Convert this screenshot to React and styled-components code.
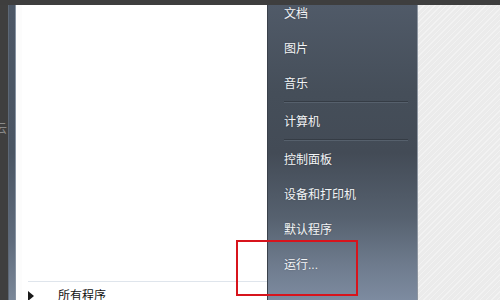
import React from 'react';
import styled, { createGlobalStyle } from 'styled-components';

const GlobalStyle = createGlobalStyle`
	html, body {
		margin: 0;
		padding: 0;
		background: #3d3d3d;
	}
	body {
		font-family: "Liberation Sans", "Noto Sans CJK SC", sans-serif;
	}
`;

const places = [
	{ label: '文档' },
	{ label: '图片' },
	{ label: '音乐', divider: true },
	{ label: '计算机', divider: true },
	{ label: '控制面板' },
	{ label: '设备和打印机' },
	{ label: '默认程序' },
	{ label: '运行...' },
];

const App = () => {
	return (
		<>
			<GlobalStyle />
			<Screen>
				<TopBar />
				<Body>
					<Gutter>
						<GutterText>云</GutterText>
					</Gutter>
					<Rail />
					<ProgramsPane>
						<Spacer />
						<AllPrograms>
							<Arrow />
							<span>所有程序</span>
						</AllPrograms>
					</ProgramsPane>
					<PlacesPane>
						<PlacesList>
							{places.map((item) => (
								<React.Fragment key={item.label}>
									<PlaceItem>{item.label}</PlaceItem>
									{item.divider && <Divider />}
								</React.Fragment>
							))}
						</PlacesList>
					</PlacesPane>
					<Backdrop />
				</Body>
				<Highlight />
			</Screen>
		</>
	);
};

const Screen = styled.div`
	position: relative;
	width: 500px;
	height: 300px;
	overflow: hidden;
	display: flex;
	flex-direction: column;
	background: #3d3d3d;
`;

const TopBar = styled.div`
	height: 5px;
	flex: none;
	background: #3e3e3e;
`;

const Body = styled.div`
	flex: 1;
	display: flex;
	min-height: 0;
`;

const Gutter = styled.div`
	width: 8px;
	flex: none;
	background: #3f3f3f;
	overflow: hidden;
	padding-top: 117px;
	box-sizing: border-box;
`;

const GutterText = styled.div`
	margin-left: -5px;
	font-size: 12px;
	line-height: 14px;
	color: #8a8a8a;
	white-space: nowrap;
`;

const Rail = styled.div`
	width: 8px;
	flex: none;
	box-sizing: border-box;
	border-left: 1px solid #5d6876;
	border-right: 1px solid #8793a2;
	background: linear-gradient(#4c5766 0%, #4a5563 50%, #5f6b7c 80%, #7a8798 100%);
`;

const ProgramsPane = styled.div`
	width: 251px;
	flex: none;
	display: flex;
	flex-direction: column;
	background: #ffffff;
	border-left: 6px solid #fcfcfc;
	box-sizing: border-box;
`;

const Spacer = styled.div`
	flex: 1;
`;

const AllPrograms = styled.div`
	height: 14px;
	flex: none;
	display: flex;
	align-items: flex-start;
	gap: 24px;
	margin: 0 0 -3px 6px;
	padding-top: 7px;
	border-top: 1px solid #dfe5ec;
	font-size: 12px;
	line-height: 14px;
	color: #111;
`;

const Arrow = styled.span`
	width: 0;
	height: 0;
	margin-top: 2px;
	border-top: 5px solid transparent;
	border-bottom: 5px solid transparent;
	border-left: 6px solid #1a1a1a;
`;

const PlacesPane = styled.div`
	width: 151px;
	flex: none;
	box-sizing: border-box;
	overflow: hidden;
	border-left: 1px solid #3a414b;
	border-right: 1px solid #8d95a0;
	background: linear-gradient(
		#505a68 0%,
		#454e59 30%,
		#434b56 50%,
		#56616f 72%,
		#6e7b8d 88%,
		#7d8ba0 100%
	);
`;

const PlacesList = styled.div`
	margin-top: -10px;
	padding: 0 9px 0 16px;
	display: flex;
	flex-direction: column;
`;

const PlaceItem = styled.div`
	height: 35px;
	display: flex;
	align-items: center;
	font-size: 12px;
	color: #f3f5f7;
	text-shadow: 0 0 2px rgba(0, 0, 0, 0.25);
	white-space: nowrap;
`;

const Divider = styled.div`
	margin-top: 1px;
	border-top: 1px solid #353c45;
	border-bottom: 1px solid #56606c;
`;

const Backdrop = styled.div`
	flex: 1;
	background-color: #ebebeb;
	background-image: repeating-linear-gradient(
		135deg,
		rgba(255, 255, 255, 0.35) 0px,
		rgba(255, 255, 255, 0.35) 1px,
		transparent 1px,
		transparent 4px
	);
`;

const Highlight = styled.div`
	position: absolute;
	left: 236px;
	top: 240px;
	width: 122px;
	height: 56px;
	box-sizing: border-box;
	border: 2px solid #d7141c;
`;

export default App;
